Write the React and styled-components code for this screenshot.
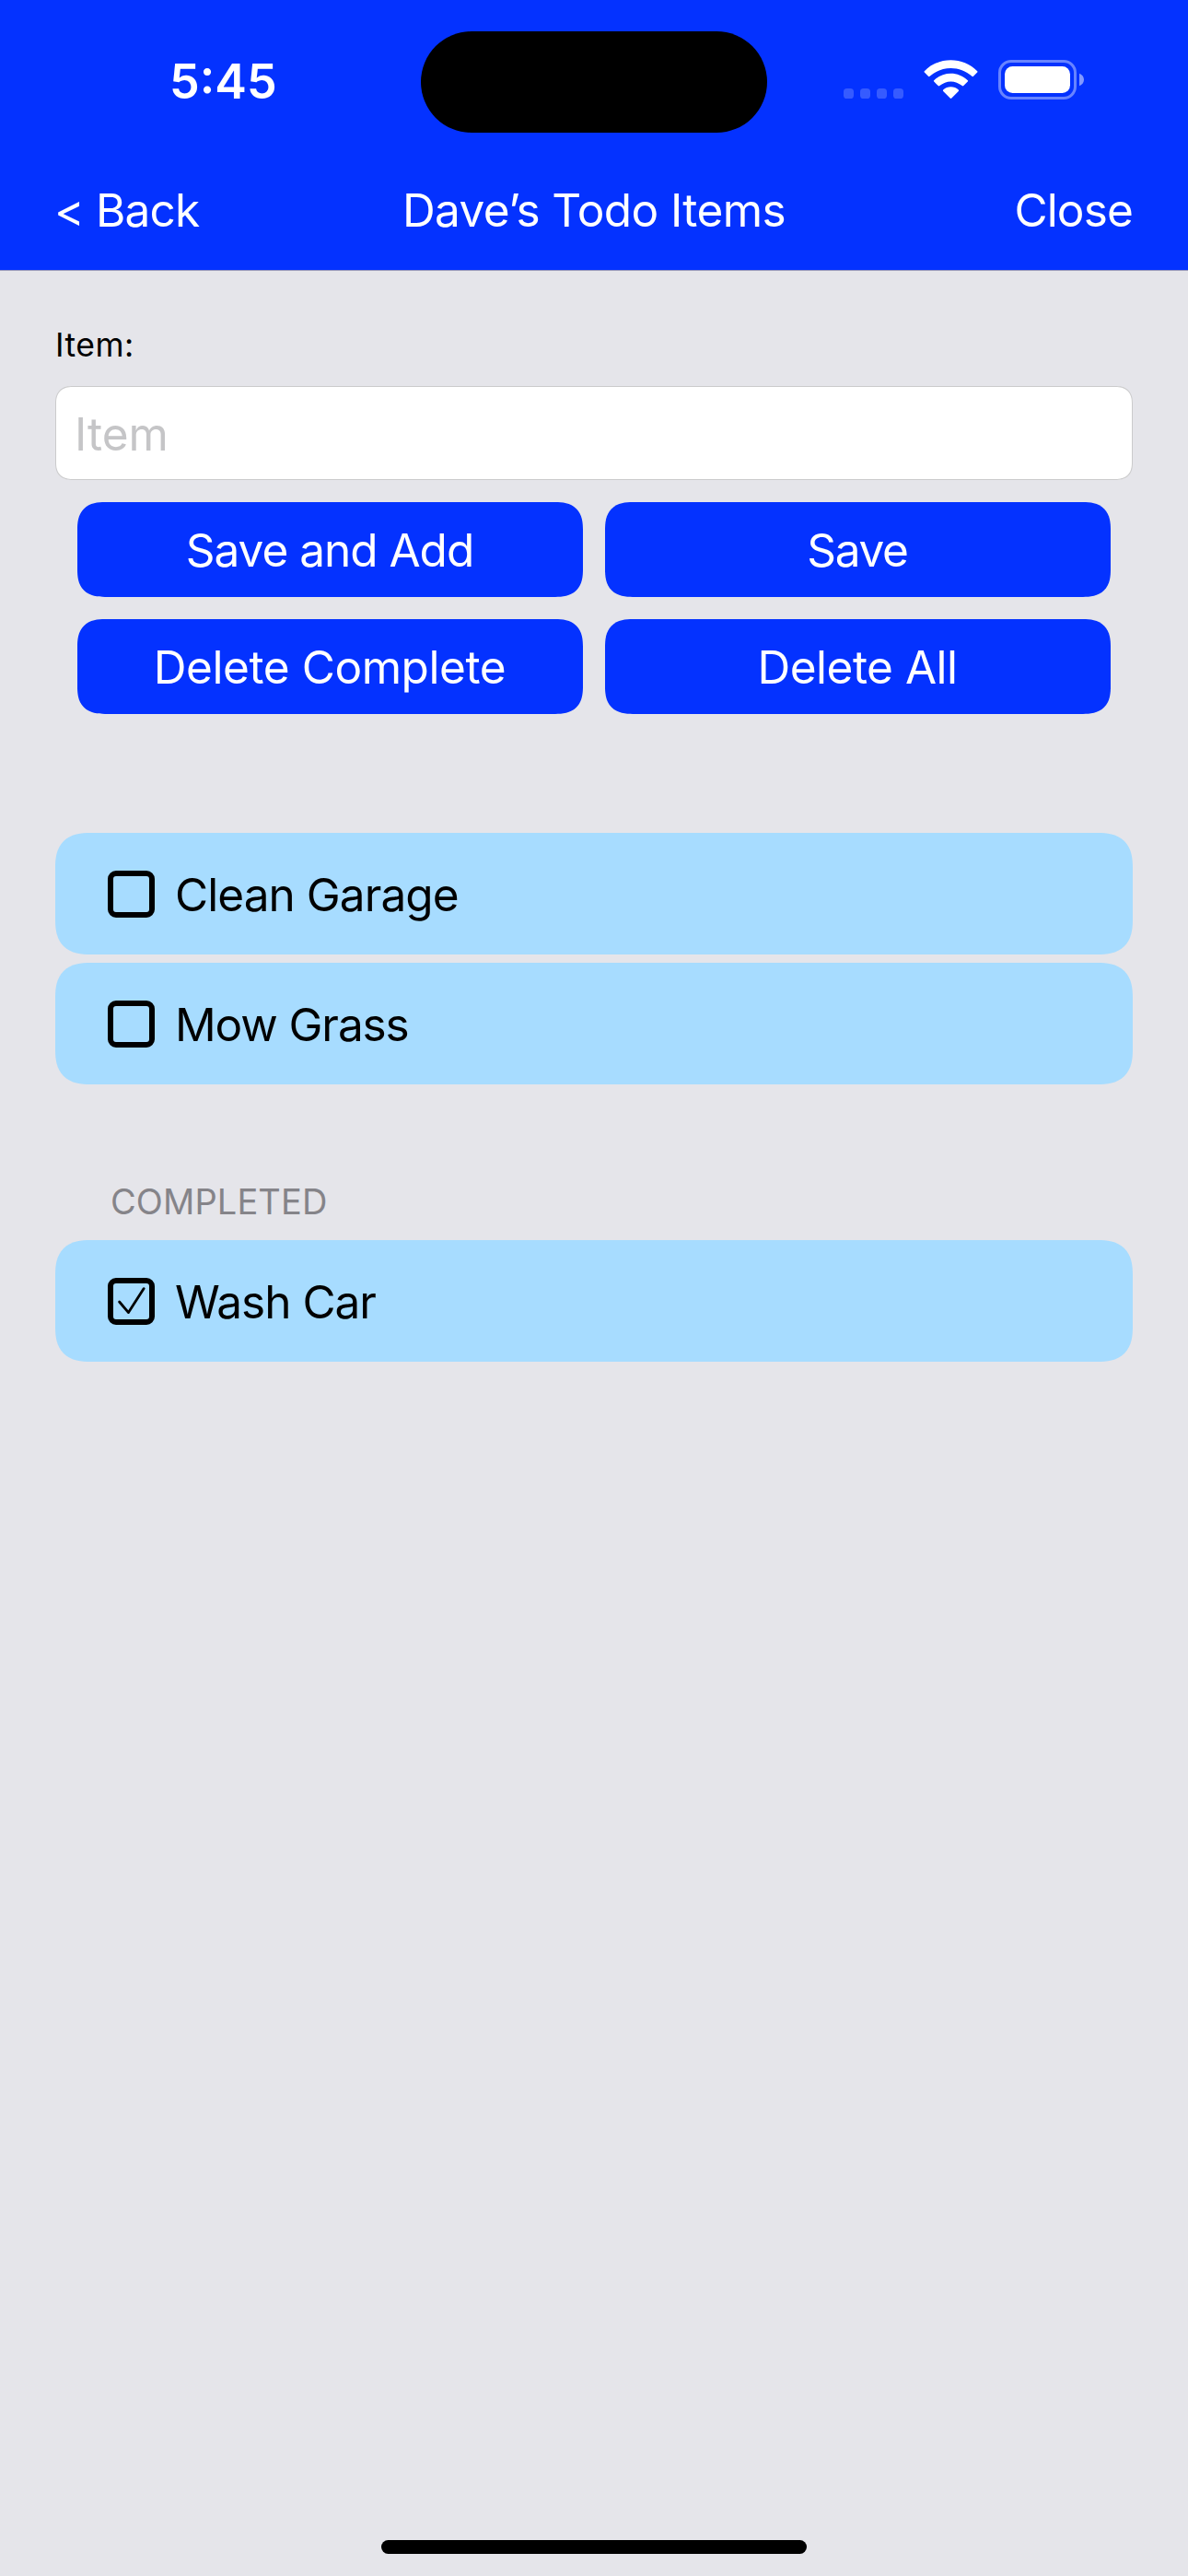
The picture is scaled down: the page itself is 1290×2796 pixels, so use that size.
import React from "react";
import styled, { createGlobalStyle } from "styled-components";

const GlobalStyle = createGlobalStyle`
  *, *::before, *::after { box-sizing: border-box; }
  body {
    margin: 0;
    background: #e5e5ea;
    font-family: Inter, "Liberation Sans", sans-serif;
  }
  button, input { font-family: inherit; }
`;

const Screen = styled.div`
  display: flex;
  flex-direction: column;
  width: 1290px;
  height: 2796px;
  background: #e5e5ea;
  color: #000;
  overflow: hidden;
`;

const Header = styled.header`
  height: 294px;
  background: #0432ff;
  border-bottom: 1px solid #9c9cbc;
  color: #fff;
`;

const StatusBar = styled.div`
  display: grid;
  grid-template-columns: 457px 376px 1fr;
  align-items: center;
  height: 177px;
`;

const Time = styled.span`
  padding-left: 184px;
  font-size: 52px;
  font-weight: 600;
  line-height: 64px;
`;

const Island = styled.div`
  height: 110px;
  margin-top: 1px;
  border-radius: 55px;
  background: #000;
`;

const StatusIcons = styled.div`
  display: flex;
  align-items: flex-end;
  height: 43px;
  margin-bottom: 4px;
  padding-left: 83px;
`;

const CellularDots = styled.svg`
  display: block;
  width: 65px;
  height: 11px;
  margin: 0 22px 1px 0;
`;

const WifiIcon = styled.svg`
  display: block;
  width: 59px;
  height: 43px;
  margin-right: 22px;
`;

const BatteryIcon = styled.svg`
  display: block;
  width: 94px;
  height: 43px;
`;

const NavBar = styled.nav`
  display: grid;
  grid-template-columns: 1fr auto 1fr;
  align-items: center;
  height: 102px;
  padding: 0 60px 0 59px;
`;

const NavButton = styled.button`
  justify-self: ${(p) => p.$side};
  padding: 0;
  border: 0;
  background: none;
  color: inherit;
  font-size: 49.5px;
  line-height: 60px;
  letter-spacing: -0.85px;
`;

const Title = styled.h1`
  margin: 0;
  padding-left: 1px;
  font-size: 49.5px;
  font-weight: 400;
  line-height: 60px;
  letter-spacing: -0.6px;
`;

const Content = styled.main`
  flex: 1;
  padding: 59px 60px 0;
`;

const FieldLabel = styled.label`
  display: block;
  margin: 0 0 23px;
  font-size: 35.5px;
  line-height: 43px;
  letter-spacing: 0.5px;
`;

const TextField = styled.input`
  display: block;
  width: 100%;
  height: 102px;
  padding: 2px 20px 0;
  border: 1px solid #cbcbcc;
  border-radius: 19px;
  corner-shape: superellipse(1.3);
  background: #fff;
  font-size: 49.5px;
  outline: none;
  &::placeholder { color: #c5c5c7; opacity: 1; }
`;

const Actions = styled.div`
  display: grid;
  grid-template-columns: 1fr 1fr;
  gap: 24px;
  padding: 24px;
`;

const ActionButton = styled.button`
  height: 103px;
  padding: 1px 1px 0 0;
  border: 0;
  border-radius: 30px;
  corner-shape: superellipse(1.35);
  background: #0432ff;
  color: #fff;
  font-size: 49.5px;
  line-height: 60px;
  letter-spacing: ${(p) => p.$track}px;
`;

const TodoList = styled.ul`
  display: flex;
  flex-direction: column;
  gap: 9px;
  margin: ${(p) => p.$top}px 0 0;
  padding: 0;
  list-style: none;
`;

const TodoRow = styled.li`
  display: flex;
  align-items: center;
  gap: 22px;
  height: 132px;
  padding: 1px 57px 0;
  border-radius: 38px;
  corner-shape: superellipse(1.35);
  background: #a7dcff;
`;

const Checkbox = styled.span`
  display: flex;
  width: 51px;
  height: 51px;
  border: 6px solid #000;
  border-radius: 9px;
`;

const TodoText = styled.span`
  padding-top: 1px;
  font-size: 49.5px;
  line-height: 60px;
  letter-spacing: ${(p) => p.$track}px;
`;

const SectionTitle = styled.h2`
  margin: 103px 0 0 60px;
  color: #858489;
  font-size: 38px;
  font-weight: 400;
  line-height: 48px;
  letter-spacing: 0.1px;
`;

const HomeIndicator = styled.div`
  align-self: center;
  width: 462px;
  height: 15px;
  margin-bottom: 24px;
  border-radius: 8px;
  background: #000;
`;

function Todo({ text, track, done }) {
  return (
    <TodoRow>
      <Checkbox>
        {done && (
          <svg width="39" height="39" viewBox="0 0 39 39" fill="none" stroke="#000" strokeLinecap="round" strokeLinejoin="round" strokeWidth="2.8">
            <path d="M6.6 20 L16.5 31.6 L33.2 5.6" />
          </svg>
        )}
      </Checkbox>
      <TodoText $track={track}>{text}</TodoText>
    </TodoRow>
  );
}

const actions = [
  { label: "Save and Add", track: -1 },
  { label: "Save", track: -1.3 },
  { label: "Delete Complete", track: -0.43 },
  { label: "Delete All", track: -0.5 },
];

export default function App() {
  return (
    <>
      <GlobalStyle />
      <Screen>
        <Header>
          <StatusBar>
            <Time>5:45</Time>
            <Island />
            <StatusIcons>
              <CellularDots viewBox="0 0 65 11" fill="#fff" fillOpacity="0.2">
                {[0, 18, 36, 54].map((x) => (
                  <rect key={x} x={x} y="0" width="11" height="11" rx="3.6" />
                ))}
              </CellularDots>
              <WifiIcon viewBox="0 0 59 43" fill="#fff">
                <path d="M0.8 12.2 C16 -3.8 43 -3.8 58.2 12.2 Q58.8 12.9 58.2 13.6 L54 17.8 Q53.2 18.6 52.4 17.8 C39.4 5.9 19.6 5.9 6.6 17.8 Q5.8 18.6 5 17.8 L0.8 13.6 Q0.2 12.9 0.8 12.2 Z" />
                <path d="M11.2 22.2 C21.5 12.2 37.5 12.2 47.8 22.2 Q48.5 22.9 47.8 23.6 L43.3 28.1 Q42.5 28.8 41.7 28.1 C34.5 21.8 24.5 21.8 17.3 28.1 Q16.5 28.8 15.7 28.1 L11.2 23.6 Q10.5 22.9 11.2 22.2 Z" />
                <path d="M21.2 32.4 C25.8 28.2 33.2 28.2 37.8 32.4 Q38.5 33.1 37.8 33.9 L30.3 41.5 Q29.5 42.3 28.7 41.5 L21.2 33.9 Q20.5 33.1 21.2 32.4 Z" />
              </WifiIcon>
              <BatteryIcon viewBox="0 0 94 43">
                <rect x="1.5" y="1.5" width="82" height="40" rx="12.5" fill="none" stroke="#fff" strokeOpacity="0.4" strokeWidth="3" />
                <rect x="7" y="7" width="71" height="29" rx="8.5" fill="#fff" />
                <path d="M88 14.7 C91.4 16 93 18.6 93 21.5 C93 24.4 91.4 27 88 28.3 Z" fill="#fff" fillOpacity="0.5" />
              </BatteryIcon>
            </StatusIcons>
          </StatusBar>
          <NavBar>
            <NavButton $side="start">&lt; Back</NavButton>
            <Title>Dave’s Todo Items</Title>
            <NavButton $side="end">Close</NavButton>
          </NavBar>
        </Header>
        <Content>
          <FieldLabel htmlFor="item">Item:</FieldLabel>
          <TextField id="item" placeholder="Item" />
          <Actions>
            {actions.map(({ label, track }) => (
              <ActionButton key={label} $track={track}>{label}</ActionButton>
            ))}
          </Actions>
          <TodoList $top={105}>
            <Todo text="Clean Garage" track={-0.93} />
            <Todo text="Mow Grass" track={-1.1} />
          </TodoList>
          <SectionTitle>COMPLETED</SectionTitle>
          <TodoList $top={18}>
            <Todo text="Wash Car" track={-1} done />
          </TodoList>
        </Content>
        <HomeIndicator />
      </Screen>
    </>
  );
}
